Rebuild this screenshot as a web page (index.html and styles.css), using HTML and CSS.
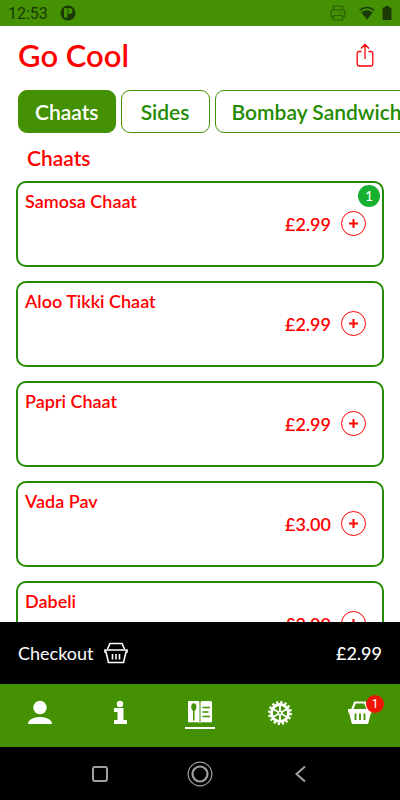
FILE: index.html
```html
<!DOCTYPE html>
<html lang="en">
<head>
    <meta charset="UTF-8">
    <meta name="viewport" content="width=device-width, initial-scale=1.0">
    <title>Go Cool</title>
    <link rel="stylesheet" href="styles.css">
</head>
<body>
    <div class="status-bar">
        <span class="clock">12:53</span>
        <svg class="app-icon" width="16" height="16" viewBox="0 0 16 16">
            <circle cx="8" cy="8" r="7.5" fill="#1b3a06"/>
            <path d="M4 3h3.500v9.500H4z M8.300 3h1.200a3 3 0 0 1 0 6H8.300z" fill="#449103"/>
        </svg>
        <div class="status-icons">
            <svg width="16" height="16" viewBox="0 0 16 16" fill="none" stroke="#2c5e05" stroke-width="1.2">
                <path d="M3.5 5V1h9v4 M3.5 12H1.2V7a2 2 0 0 1 2-2h9.600a2 2 0 0 1 2 2v5h-2.300 M3.500 10.500h9v4.500h-9z M9.500 7.700h1 M12 7.700h1"/>
            </svg>
            <svg class="wifi" width="18" height="16" viewBox="0 0 18 16">
                <path d="M1.500 5.500C6 1.500 12 1.500 16.500 5.500" fill="none" stroke="#1b3a06" stroke-width="1.500"/>
                <path d="M3.300 7.500C7 4.600 11 4.600 14.700 7.500L9 14.500z" fill="#1b3a06"/>
            </svg>
            <svg width="10" height="16" viewBox="0 0 10 16">
                <path d="M3 1h4v1.500h1.500a1 1 0 0 1 1 1V14a1 1 0 0 1-1 1h-7a1 1 0 0 1-1-1V3.500a1 1 0 0 1 1-1H3z" fill="#1b3a06"/>
            </svg>
        </div>
    </div>

    <header class="header">
        <h1>Go Cool</h1>
        <button class="share-button" aria-label="Share">
            <svg width="18" height="24" viewBox="0 0 18 24" fill="none" stroke="#ff0000" stroke-width="1.300">
                <path d="M5.500 8.500H3a1.800 1.800 0 0 0-1.800 1.800v11A1.800 1.800 0 0 0 3 23h12a1.800 1.800 0 0 0 1.800-1.700v-11A1.800 1.800 0 0 0 15 8.500h-2.500 M9 16V1.500 M5 5.500l4-4 4 4"/>
            </svg>
        </button>
    </header>

    <div class="tabs">
        <button class="tab active">Chaats</button>
        <button class="tab">Sides</button>
        <button class="tab">Bombay Sandwich</button>
    </div>

    <main class="menu">
        <h2>Chaats</h2>
        <div class="items">
            <div class="item">
                <h3>Samosa Chaat</h3>
                <div class="item-order">
                    <span class="price">£2.99</span>
                    <button class="add-button" aria-label="Add Samosa Chaat"><svg width="9" height="9" viewBox="0 0 9 9"><path d="M4.500 0v9M0 4.500h9"/></svg></button>
                </div>
                <span class="item-count">1</span>
            </div>
            <div class="item">
                <h3>Aloo Tikki Chaat</h3>
                <div class="item-order">
                    <span class="price">£2.99</span>
                    <button class="add-button" aria-label="Add Aloo Tikki Chaat"><svg width="9" height="9" viewBox="0 0 9 9"><path d="M4.500 0v9M0 4.500h9"/></svg></button>
                </div>
            </div>
            <div class="item">
                <h3>Papri Chaat</h3>
                <div class="item-order">
                    <span class="price">£2.99</span>
                    <button class="add-button" aria-label="Add Papri Chaat"><svg width="9" height="9" viewBox="0 0 9 9"><path d="M4.500 0v9M0 4.500h9"/></svg></button>
                </div>
            </div>
            <div class="item">
                <h3>Vada Pav</h3>
                <div class="item-order">
                    <span class="price">£3.00</span>
                    <button class="add-button" aria-label="Add Vada Pav"><svg width="9" height="9" viewBox="0 0 9 9"><path d="M4.500 0v9M0 4.500h9"/></svg></button>
                </div>
            </div>
            <div class="item">
                <h3>Dabeli</h3>
                <div class="item-order">
                    <span class="price">£3.00</span>
                    <button class="add-button" aria-label="Add Dabeli"><svg width="9" height="9" viewBox="0 0 9 9"><path d="M4.500 0v9M0 4.500h9"/></svg></button>
                </div>
            </div>
        </div>
    </main>

    <button class="checkout">
        <span>Checkout</span>
        <svg width="24" height="22" viewBox="0 0 24 22" fill="none" stroke="#ffffff" stroke-width="1.600">
            <path d="M3.500 7L6 1.500h12L20.500 7 M1 8h22v2h-1l-2.500 10.500h-15L2 10H1z M8.500 12v5.500 M12 12v5.500 M15.500 12v5.500"/>
        </svg>
        <span class="total">£2.99</span>
    </button>

    <nav class="nav">
        <a href="#account" aria-label="Account">
            <svg width="26" height="26" viewBox="0 0 26 26" fill="#ffffff">
                <circle cx="13" cy="7.500" r="6.700"/>
                <path d="M1 24c0-4 5-7 12-7s12 3 12 7z"/>
            </svg>
        </a>
        <a href="#info" aria-label="Information">
            <svg width="26" height="26" viewBox="0 0 26 26" fill="#ffffff">
                <circle cx="13" cy="4" r="3.200"/>
                <path d="M7 8h9.500v12H20v4H7v-4h3.500v-8H7z"/>
            </svg>
        </a>
        <a href="#menu" class="current" aria-label="Menu">
            <svg width="26" height="26" viewBox="0 0 26 26">
                <path d="M2 1h9a1.500 1.500 0 0 1 1.500 1.500v21a2 2 0 0 0-2-1.200H1V2a1 1 0 0 1 1-1z M15 1h8.500a1.500 1.500 0 0 1 1.500 1.500v19.800H15.500a2 2 0 0 0-2 1.200v-21A1.500 1.500 0 0 1 15 1z" fill="#ffffff"/>
                <ellipse cx="6.800" cy="7" rx="2.600" ry="3.700" fill="#449103"/>
                <path d="M6.800 9v11 M16 7.500h6.500 M16 12h5 M16 16.500h6.500" fill="none" stroke="#449103" stroke-width="1.500" stroke-linecap="round"/>
            </svg>
        </a>
        <a href="#settings" aria-label="Settings">
            <svg width="26" height="26" viewBox="0 0 26 26" fill="none" stroke="#ffffff">
                <circle cx="13" cy="13" r="8.500" stroke-width="2.800"/>
                <circle cx="13" cy="13" r="10.700" stroke-width="2.600" stroke-dasharray="2.200 2" />
                <path d="M13 4v18 M5.200 8.500l15.600 9 M5.200 17.500l15.600-9" stroke-width="1.900"/>
                <circle cx="13" cy="13" r="2.500" fill="#ffffff" stroke="none"/>
                <circle cx="13" cy="13" r="1" fill="#449103" stroke="none"/>
            </svg>
        </a>
        <a href="#basket" aria-label="Basket">
            <svg width="26" height="26" viewBox="0 0 26 26">
                <path d="M5 10l3-7.500h10l3 7.500" fill="none" stroke="#ffffff" stroke-width="2.200"/>
                <path d="M1 9h24v3.500h-1l-2.500 10a2 2 0 0 1-2 1.500h-13a2 2 0 0 1-2-1.500L2 12.500H1z" fill="#ffffff"/>
                <path d="M8.500 13.500v6.500 M13 13.500v6.500 M17.500 13.500v6.500" stroke="#449103" stroke-width="1.800"/>
            </svg>
            <span class="basket-count">1</span>
        </a>
    </nav>

    <div class="system-bar">
        <button aria-label="Recent apps">
            <svg width="26" height="26" viewBox="0 0 26 26" fill="none" stroke="#a0a0a0" stroke-width="2">
                <rect x="6" y="6" width="14" height="14" rx="2"/>
            </svg>
        </button>
        <button aria-label="Home">
            <svg width="26" height="26" viewBox="0 0 26 26" fill="none" stroke="#a0a0a0">
                <circle cx="13" cy="13" r="11.800" stroke-width="1.200"/>
                <circle cx="13" cy="13" r="7.500" stroke-width="2.200"/>
            </svg>
        </button>
        <button aria-label="Back">
            <svg width="26" height="26" viewBox="0 0 26 26" fill="none" stroke="#a0a0a0" stroke-width="2">
                <path d="M18 5.500L9.500 13l8.500 7.500"/>
            </svg>
        </button>
    </div>
</body>
</html>
```

FILE: styles.css
```css
* {
    box-sizing: border-box;
}
body {
    margin: 0;
    height: 100vh;
    display: flex;
    flex-direction: column;
    overflow: hidden;
    font-family: Lato, "Liberation Sans", sans-serif;
    background-color: white;
    color: #ff0000;
}
h1, h2, h3 {
    margin: 0;
    font-weight: 600;
}
button {
    padding: 0;
    border: none;
    background: none;
    font-family: inherit;
    color: inherit;
    cursor: pointer;
}
svg {
    display: block;
}
.status-bar {
    display: flex;
    align-items: center;
    height: 26px;
    flex-shrink: 0;
    padding: 0 8px;
    background-color: #449103;
}
.clock {
    font-family: Roboto, sans-serif;
    font-size: 16px;
    color: #1b3a06;
}
.app-icon {
    margin-left: 12px;
}
.status-icons {
    display: flex;
    margin-left: auto;
}
.wifi {
    margin: 0 6px 0 12px;
}
.header {
    display: flex;
    align-items: center;
    justify-content: space-between;
    padding: 10px 26px 16px 18px;
}
.header h1 {
    font-size: 31px;
    line-height: 38px;
}
.tabs {
    display: flex;
    flex-shrink: 0;
    gap: 5px;
    padding-left: 18px;
    overflow: hidden;
}
.tab {
    flex-shrink: 0;
    min-width: 89px;
    height: 43px;
    padding: 0 16px;
    border: 1px solid #449103;
    border-radius: 9px;
    font-size: 21px;
    font-weight: 600;
    color: #228b00;
}
.tab.active {
    background-color: #449103;
    color: white;
}
.menu {
    flex: 1;
    min-height: 0;
    padding: 13px 16px 0;
    overflow: hidden;
}
.menu h2 {
    padding-left: 11px;
    font-size: 21px;
    line-height: 24px;
}
.items {
    display: flex;
    flex-direction: column;
    gap: 14px;
    margin-top: 11px;
}
.item {
    position: relative;
    flex-shrink: 0;
    height: 86px;
    padding: 8px 16px 0 7px;
    border: 2px solid #228b00;
    border-radius: 10px;
}
.item h3 {
    font-size: 18px;
    line-height: 20px;
}
.item-order {
    display: flex;
    align-items: center;
    justify-content: flex-end;
    gap: 10px;
}
.price {
    font-size: 18px;
    line-height: 20px;
    font-weight: 600;
}
.add-button {
    display: flex;
    align-items: center;
    justify-content: center;
    width: 25px;
    height: 25px;
    border: 1px solid #ff0000;
    border-radius: 50%;
}
.add-button path {
    stroke: #ff0000;
    stroke-width: 2;
}
.item-count {
    position: absolute;
    top: 2px;
    right: 2px;
    width: 22px;
    border-radius: 50%;
    background-color: #18b030;
    color: white;
    font-size: 14px;
    line-height: 22px;
    text-align: center;
}
.checkout {
    display: flex;
    align-items: center;
    flex-shrink: 0;
    gap: 10px;
    height: 62px;
    padding: 0 18px;
    background-color: black;
    color: white;
    font-size: 18px;
}
.total {
    margin-left: auto;
    font-weight: 500;
}
.nav {
    display: flex;
    flex-shrink: 0;
    height: 63px;
    background-color: #449103;
}
.nav a {
    position: relative;
    flex: 1;
    display: flex;
    flex-direction: column;
    align-items: center;
    padding-top: 16px;
}
.nav .current::after {
    content: "";
    width: 30px;
    height: 2px;
    margin-top: 1px;
    background-color: white;
}
.basket-count {
    position: absolute;
    top: 11px;
    left: 50%;
    width: 18px;
    margin-left: 6px;
    border-radius: 50%;
    background-color: #ee1505;
    color: white;
    font-family: Roboto, sans-serif;
    font-size: 12px;
    line-height: 18px;
    text-align: center;
}
.system-bar {
    display: flex;
    align-items: center;
    justify-content: center;
    flex-shrink: 0;
    gap: 74px;
    height: 53px;
    background-color: black;
}
```
